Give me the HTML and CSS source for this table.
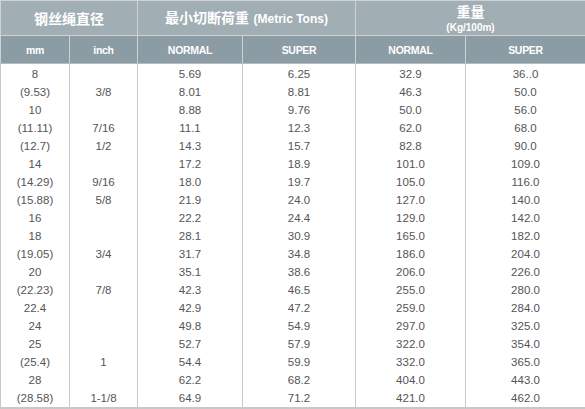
FILE: index.html
```html
<!DOCTYPE html>
<html>
<head>
<meta charset="utf-8">
<link rel="stylesheet" href="styles.css">
</head>
<body>
<table class="spec">
  <colgroup>
    <col class="c1"><col class="c2"><col class="c3"><col class="c4"><col class="c5"><col class="c6">
  </colgroup>
  <thead>
    <tr class="h1">
      <th colspan="2"><span class="cn">钢丝绳直径</span></th>
      <th colspan="2"><span class="cn">最小切断荷重</span> <span class="en">(Metric Tons)</span></th>
      <th colspan="2" class="stack"><span class="cn">重量</span><br><span class="unit">(Kg/100m)</span></th>
    </tr>
    <tr class="h2">
      <th>mm</th><th>inch</th><th>NORMAL</th><th>SUPER</th><th>NORMAL</th><th>SUPER</th>
    </tr>
  </thead>
  <tbody>
    <tr class="first"><td>8</td><td></td><td>5.69</td><td>6.25</td><td>32.9</td><td>36..0</td></tr>
    <tr><td>(9.53)</td><td>3/8</td><td>8.01</td><td>8.81</td><td>46.3</td><td>50.0</td></tr>
    <tr><td>10</td><td></td><td>8.88</td><td>9.76</td><td>50.0</td><td>56.0</td></tr>
    <tr><td>(11.11)</td><td>7/16</td><td>11.1</td><td>12.3</td><td>62.0</td><td>68.0</td></tr>
    <tr><td>(12.7)</td><td>1/2</td><td>14.3</td><td>15.7</td><td>82.8</td><td>90.0</td></tr>
    <tr><td>14</td><td></td><td>17.2</td><td>18.9</td><td>101.0</td><td>109.0</td></tr>
    <tr><td>(14.29)</td><td>9/16</td><td>18.0</td><td>19.7</td><td>105.0</td><td>116.0</td></tr>
    <tr><td>(15.88)</td><td>5/8</td><td>21.9</td><td>24.0</td><td>127.0</td><td>140.0</td></tr>
    <tr><td>16</td><td></td><td>22.2</td><td>24.4</td><td>129.0</td><td>142.0</td></tr>
    <tr><td>18</td><td></td><td>28.1</td><td>30.9</td><td>165.0</td><td>182.0</td></tr>
    <tr><td>(19.05)</td><td>3/4</td><td>31.7</td><td>34.8</td><td>186.0</td><td>204.0</td></tr>
    <tr><td>20</td><td></td><td>35.1</td><td>38.6</td><td>206.0</td><td>226.0</td></tr>
    <tr><td>(22.23)</td><td>7/8</td><td>42.3</td><td>46.5</td><td>255.0</td><td>280.0</td></tr>
    <tr><td>22.4</td><td></td><td>42.9</td><td>47.2</td><td>259.0</td><td>284.0</td></tr>
    <tr><td>24</td><td></td><td>49.8</td><td>54.9</td><td>297.0</td><td>325.0</td></tr>
    <tr><td>25</td><td></td><td>52.7</td><td>57.9</td><td>322.0</td><td>354.0</td></tr>
    <tr><td>(25.4)</td><td>1</td><td>54.4</td><td>59.9</td><td>332.0</td><td>365.0</td></tr>
    <tr><td>28</td><td></td><td>62.2</td><td>68.2</td><td>404.0</td><td>443.0</td></tr>
    <tr class="last"><td>(28.58)</td><td>1-1/8</td><td>64.9</td><td>71.2</td><td>421.0</td><td>462.0</td></tr>
  </tbody>
</table>
</body>
</html>
```

FILE: styles.css
```css
html, body {
  margin: 0;
  padding: 0;
  background: #ffffff;
}

.spec {
  width: 585px;
  table-layout: fixed;
  border-collapse: collapse;
  font-family: "Liberation Sans", Arial, "Noto Sans CJK SC", sans-serif;
}

.c1 { width: 69px; }
.c2 { width: 68px; }
.c3 { width: 105px; }
.c4 { width: 113px; }
.c5 { width: 110px; }
.c6 { width: 120px; }

.spec th {
  color: #ffffff;
  font-weight: bold;
  text-align: center;
  padding: 0;
  border: 1px solid #cdd2d5;
}

.h1 th {
  background: #a1aeb4;
  height: 34px;
  line-height: 14px;
}

.h1 th.stack {
  padding-top: 2px;
  height: 32px;
}

.h1 .cn {
  font-family: "Noto Sans CJK SC", sans-serif;
  font-size: 14px;
  font-weight: bold;
}

.h1 .en {
  font-size: 12px;
  letter-spacing: 0;
}

.h1 .unit {
  font-size: 10px;
  line-height: 13px;
}

.h2 th {
  background: #8c9ca4;
  height: 27px;
  font-size: 10.5px;
  letter-spacing: -0.3px;
  border-bottom: 1px solid #b4bcc0;
}

.spec td {
  height: 18px;
  padding: 0;
  text-align: center;
  font-size: 11.5px;
  color: #555555;
  border-left: 1px solid #c8c8c8;
  border-right: 1px solid #c8c8c8;
}

.spec tr.first td {
  padding-top: 1px;
}

.spec tr.last td {
  border-bottom: 2px solid #c8c8c8;
}
```
